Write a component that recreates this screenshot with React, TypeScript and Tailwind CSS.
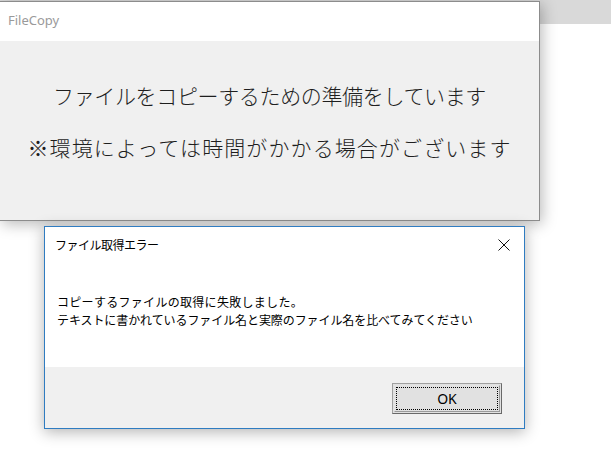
import React from "react";

const jp = { fontFamily: '"Noto Sans CJK JP", "Noto Sans", sans-serif' };

export default function App() {
  return (
    <div className="relative w-[611px] h-[467px] overflow-hidden bg-white">
      {/* background window strip */}
      <div className="absolute left-0 top-0 w-[611px] h-[24px] bg-[#d9d9d9]" />

      {/* Main FileCopy window */}
      <div className="absolute left-0 top-[1px] w-[540px] h-[220px] flex flex-col border-t border-r border-b border-[#8c8c8c] shadow-[2px_3px_14px_rgba(0,0,0,0.28)]">
        <div className="h-[39px] bg-white flex items-center pl-[8px] pb-[1px]">
          <span
            className="text-[13px] text-[#9a9a9a]"
            style={{ fontFamily: '"Noto Sans", "Open Sans", sans-serif' }}
          >
            FileCopy
          </span>
        </div>
        <div className="flex-1 bg-[#f0f0f0] flex flex-col items-center pt-[39px] text-[#1e1e1e] font-light" style={jp}>
          <div className="text-[21px] leading-[30px] tracking-[-0.35px]">
            ファイルをコピーするための準備をしています
          </div>
          <div className="text-[21px] leading-[30px] tracking-[1.1px] mt-[22px]">
            ※環境によっては時間がかかる場合がございます
          </div>
        </div>
      </div>

      {/* Error dialog */}
      <div className="absolute left-[44px] top-[226px] w-[481px] h-[203px] flex flex-col border border-[#2f7cc1] bg-white shadow-[0_3px_14px_rgba(0,0,0,0.3)]">
        <div className="h-[35px] flex items-center justify-between pl-[10px] pr-[14px]">
          <span className="text-[12px] text-black tracking-[-0.5px]" style={jp}>
            ファイル取得エラー
          </span>
          <svg width="12" height="12" viewBox="0 0 12 12" className="mt-[1px]">
            <path d="M0.5 0.5 L11.5 11.5 M11.5 0.5 L0.5 11.5" stroke="#111" strokeWidth="1" fill="none" />
          </svg>
        </div>
        <div className="h-[105px] bg-white pt-[31px] pl-[12px] text-black text-[12px] leading-[18px]" style={jp}>
          <div className="tracking-[0.3px]">コピーするファイルの取得に失敗しました。</div>
          <div className="tracking-[-0.08px]">テキストに書かれているファイル名と実際のファイル名を比べてみてください</div>
        </div>
        <div className="flex-1 bg-[#f0f0f0] flex justify-end items-start pt-[16px] pr-[22px]">
          <div className="w-[110px] h-[31px] border border-t-[#a0a0a0] border-l-[#a0a0a0] border-r-[#696969] border-b-[#696969] bg-[#e1e1e1] p-[1px]">
            <div className="w-full h-full border border-t-[#e3e3e3] border-l-[#e3e3e3] border-r-[#9a9a9a] border-b-[#9a9a9a] p-[1px]">
              <div className="w-full h-full border border-dotted border-black flex items-center justify-center">
                <span
                  className="text-[14px] text-black leading-none"
                  style={{ fontFamily: '"Noto Sans", "Open Sans", sans-serif' }}
                >
                  OK
                </span>
              </div>
            </div>
          </div>
        </div>
      </div>
    </div>
  );
}
